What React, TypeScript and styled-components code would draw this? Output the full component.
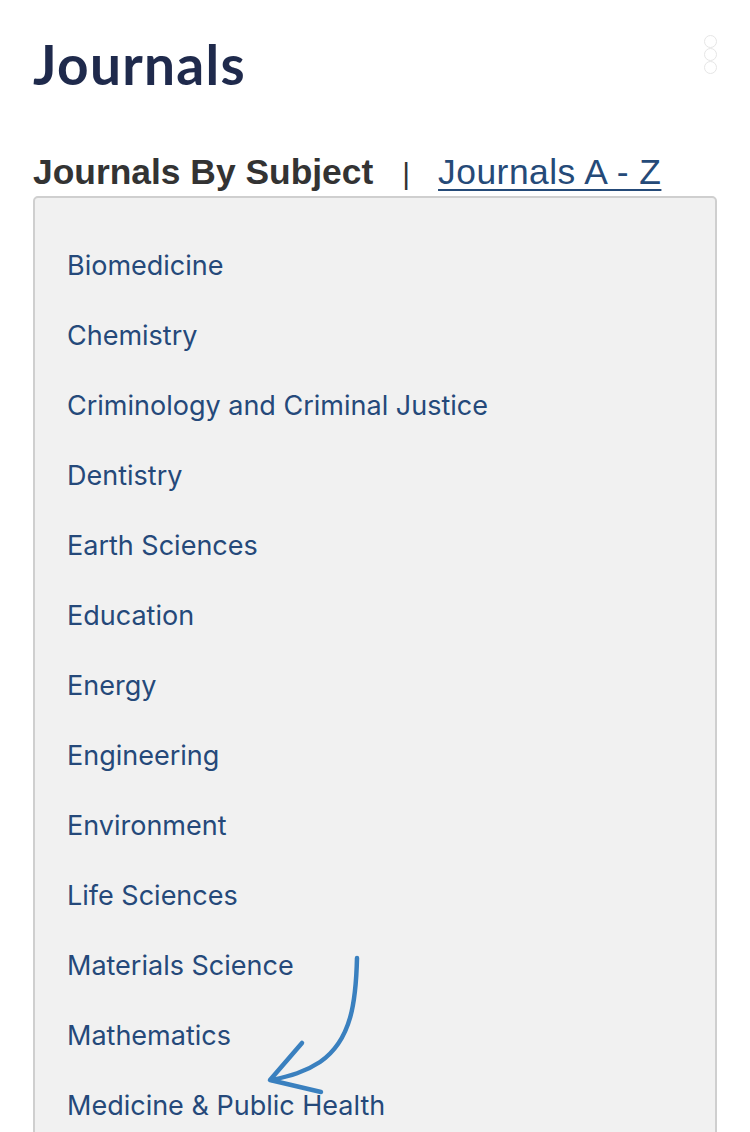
import React from "react";
import styled, { createGlobalStyle } from "styled-components";

const Global = createGlobalStyle`
  html, body { margin: 0; padding: 0; background: #ffffff; }
  body { font-family: Inter, "Liberation Sans", sans-serif; }
`;

const Page = styled.div`
  position: relative;
  padding: 0 33px 0 33px;
  overflow: hidden;
  height: 1132px;
  box-sizing: border-box;
`;

const Header = styled.header`
  display: flex;
  justify-content: space-between;
  align-items: flex-start;
  padding-top: 33px;
`;

const Title = styled.h1`
  margin: 0;
  font-family: Lato, "Open Sans", sans-serif;
  font-weight: 700;
  font-size: 55px;
  line-height: 62px;
  color: #1f2a4c;
  letter-spacing: 1.3px;
`;

const MenuDots = styled.div`
  display: flex;
  flex-direction: column;
  gap: 0;
  margin-top: 2px;
  margin-right: 0;
`;

const Dot = styled.span`
  width: 13px;
  height: 13px;
  border-radius: 50%;
  border: 1.5px solid #e6e6e6;
  box-sizing: border-box;
`;

const Tabs = styled.nav`
  display: flex;
  align-items: baseline;
  margin-top: 57px;
  font-family: "Liberation Sans", Arial, sans-serif;
  font-size: 35.4px;
  line-height: 40px;
`;

const ActiveTab = styled.span`
  font-weight: 700;
  color: #333333;
`;

const Divider = styled.span`
  color: #333333;
  margin: 0 28px 0 29px;
  font-size: 30px;
`;

const TabLink = styled.a`
  color: #254a78;
  text-decoration: underline;
  text-underline-offset: 5px;
  text-decoration-thickness: 2px;
  letter-spacing: 0.5px;
`;

const SubjectBox = styled.ul`
  list-style: none;
  margin: 2px 0 0 0;
  padding: 32px 0 0 32px;
  background: #f1f1f1;
  border: 2px solid #cfcfcf;
  border-radius: 5px;
`;

const SubjectItem = styled.li`
  height: 70px;
  display: flex;
  align-items: center;
`;

const SubjectLink = styled.a`
  font-family: Inter, "Liberation Sans", sans-serif;
  font-size: 27px;
  color: #25497a;
  text-decoration: none;
`;

const Arrow = styled.svg`
  position: absolute;
  left: 260px;
  top: 950px;
  width: 110px;
  height: 150px;
  pointer-events: none;
`;

const subjects = [
  "Biomedicine",
  "Chemistry",
  "Criminology and Criminal Justice",
  "Dentistry",
  "Earth Sciences",
  "Education",
  "Energy",
  "Engineering",
  "Environment",
  "Life Sciences",
  "Materials Science",
  "Mathematics",
  "Medicine & Public Health",
];

export default function App() {
  return (
    <>
      <Global />
      <Page>
        <Header>
          <Title>Journals</Title>
          <MenuDots aria-hidden>
            <Dot />
            <Dot />
            <Dot />
          </MenuDots>
        </Header>
        <Tabs>
          <ActiveTab>Journals By Subject</ActiveTab>
          <Divider>|</Divider>
          <TabLink href="#">Journals A - Z</TabLink>
        </Tabs>
        <SubjectBox>
          {subjects.map((s) => (
            <SubjectItem key={s}>
              <SubjectLink href="#">{s}</SubjectLink>
            </SubjectItem>
          ))}
        </SubjectBox>
        <Arrow viewBox="260 950 110 150">
          <path
            d="M357 958 C 356 1000, 352 1040, 320 1062 C 305 1072, 290 1076, 272 1080"
            fill="none"
            stroke="#3a80bf"
            strokeWidth="4.5"
            strokeLinecap="round"
          />
          <path
            d="M302 1043 L 270 1080 L 321 1092"
            fill="none"
            stroke="#3a80bf"
            strokeWidth="4.5"
            strokeLinecap="round"
            strokeLinejoin="round"
          />
        </Arrow>
      </Page>
    </>
  );
}
